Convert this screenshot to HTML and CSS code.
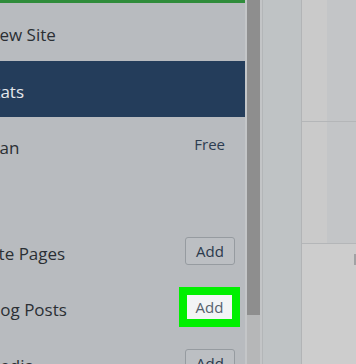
FILE: index.html
```html
<!DOCTYPE html>
<html lang="en">
<head>
  <meta charset="UTF-8">
  <meta name="viewport" content="width=device-width, initial-scale=1.0">
  <title>My Site</title>
  <link rel="stylesheet" href="styles.css">
</head>
<body>

  <div class="screen">
    <nav class="sidebar">
      <div class="current-bar"></div>
      <div class="item first"><span class="label">View Site</span></div>
      <div class="item selected"><span class="label">Stats</span></div>
      <div class="item"><span class="label">Plan</span><span class="plan">Free</span></div>
      <div class="section-gap"></div>
      <div class="item"><span class="label">Site Pages</span><button class="add">Add</button></div>
      <div class="item"><span class="label">Blog Posts</span><span class="highlight"><button class="add active">Add</button></span></div>
      <div class="item"><span class="label">Media</span><button class="add">Add</button></div>
    </nav>

    <div class="scrollbar">
      <div class="thumb"></div>
    </div>

    <div class="content">
      <div class="gutter"></div>
      <div class="cards">
        <div class="card"><div class="card-left"></div><div class="card-right"></div></div>
        <div class="card"><div class="card-left"></div><div class="card-right"></div></div>
        <div class="card plain"><span class="tick"></span></div>
      </div>
    </div>
  </div>

</body>
</html>
```

FILE: styles.css
```css
body {
  margin: 0;
  font-family: "Open Sans", "Noto Sans", Arial, sans-serif;
  background-color: #c4c6c8;
  overflow: hidden;
}

.screen {
  display: flex;
  height: 364px;
  overflow: hidden;
}

/* Barra lateral */
.sidebar {
  width: 260px;
  margin-left: -15px;
  flex-shrink: 0;
  background-color: #b8bbbf;
  color: #2b2f34;
}

.current-bar {
  height: 3px;
  background-color: #2f8c3b;
}

.item {
  height: 56px;
  display: flex;
  align-items: center;
  justify-content: space-between;
  padding-right: 10px;
  font-size: 17px;
}

.item.first {
  height: 58px;
}

.label {
  padding-top: 4px;
}

.selected {
  background-color: #243d5b;
  color: #e4e8ec;
}

.plan {
  font-size: 15px;
  color: #2d3d51;
  margin-right: 10px;
  margin-top: -2px;
}

.section-gap {
  height: 50px;
}

.add {
  width: 50px;
  height: 28px;
  padding: 0;
  font-family: inherit;
  font-size: 15px;
  color: #2b3a4c;
  background-color: #bcbfc3;
  border: 1px solid #969ba0;
  border-radius: 3px;
}

/* Destaque verde ao redor do botão */
.highlight {
  display: flex;
  border: 8px solid #00f000;
  margin-right: -5px;
}

.add.active {
  width: 45px;
  height: 24px;
  border: none;
  border-radius: 0;
  background-color: #f2f4f5;
  color: #56616d;
}

/* Barra de rolagem */
.scrollbar {
  width: 13px;
  flex-shrink: 0;
  margin-left: 2px;
  background-color: #b6b7b8;
}

.thumb {
  height: 315px;
  background-color: #8e8e8e;
}

/* Área de conteúdo */
.content {
  flex: 1;
  display: flex;
  border-left: 2px solid #c3c5c7;
}

.gutter {
  width: 38px;
  background-color: #bfc3c5;
  border-left: 1px solid #b3b6b8;
  border-right: 1px solid #b2b4b6;
}

.cards {
  flex: 1;
  display: flex;
  flex-direction: column;
}

.card {
  height: 121px;
  display: flex;
  border-bottom: 1px solid #b4b6b8;
}

.card-left {
  width: 25px;
  background-color: #cacaca;
}

.card-right {
  flex: 1;
  background-color: #c3c5c7;
}

.card.plain {
  flex: 1;
  border-bottom: none;
  background-color: #cdcdcd;
  justify-content: flex-end;
}

.tick {
  width: 2px;
  height: 11px;
  margin-top: 10px;
  background-color: #a0a2a4;
}
```
